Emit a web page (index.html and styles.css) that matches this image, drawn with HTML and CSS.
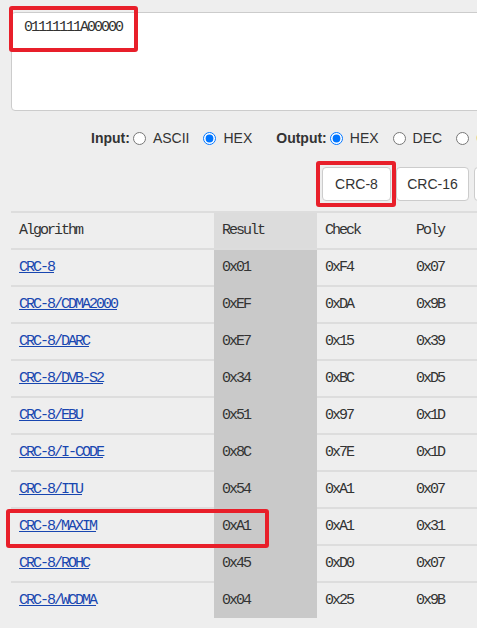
FILE: index.html
```html
<!DOCTYPE html>
<html>
<head>
<meta charset="utf-8">
<link rel="stylesheet" href="styles.css">
</head>
<body>
<div class="page">
  <div class="input-box">01111111A00000</div>

  <div class="opts">
    <span class="lbl">Input:</span>
    <label class="opt"><input type="radio" name="in"><span>ASCII</span></label>
    <label class="opt"><input type="radio" name="in" checked><span>HEX</span></label>
    <span class="lbl out">Output:</span>
    <label class="opt"><input type="radio" name="out" checked><span>HEX</span></label>
    <label class="opt"><input type="radio" name="out"><span>DEC</span></label>
    <label class="opt"><input type="radio" name="out"><span class="oct">OCT</span></label>
  </div>

  <div class="btns">
    <button class="btn w8">CRC-8</button>
    <button class="btn w16">CRC-16</button>
    <button class="btn w32">CRC-32</button>
  </div>

  <table class="crc">
    <colgroup>
      <col class="c-alg"><col class="c-res"><col class="c-chk"><col class="c-poly">
    </colgroup>
    <thead>
      <tr><th>Algorithm</th><th class="res">Result</th><th>Check</th><th>Poly</th></tr>
    </thead>
    <tbody>
      <tr><td><a href="#">CRC-8</a></td><td class="res">0x01</td><td>0xF4</td><td>0x07</td></tr>
      <tr><td><a href="#">CRC-8/CDMA2000</a></td><td class="res">0xEF</td><td>0xDA</td><td>0x9B</td></tr>
      <tr><td><a href="#">CRC-8/DARC</a></td><td class="res">0xE7</td><td>0x15</td><td>0x39</td></tr>
      <tr><td><a href="#">CRC-8/DVB-S2</a></td><td class="res">0x34</td><td>0xBC</td><td>0xD5</td></tr>
      <tr><td><a href="#">CRC-8/EBU</a></td><td class="res">0x51</td><td>0x97</td><td>0x1D</td></tr>
      <tr><td><a href="#">CRC-8/I-CODE</a></td><td class="res">0x8C</td><td>0x7E</td><td>0x1D</td></tr>
      <tr><td><a href="#">CRC-8/ITU</a></td><td class="res">0x54</td><td>0xA1</td><td>0x07</td></tr>
      <tr><td><a href="#">CRC-8/MAXIM</a></td><td class="res">0xA1</td><td>0xA1</td><td>0x31</td></tr>
      <tr><td><a href="#">CRC-8/ROHC</a></td><td class="res">0x45</td><td>0xD0</td><td>0x07</td></tr>
      <tr><td><a href="#">CRC-8/WCDMA</a></td><td class="res">0x04</td><td>0x25</td><td>0x9B</td></tr>
    </tbody>
  </table>
</div>

<div class="mark mark-input"></div>
<div class="mark mark-btn"></div>
<div class="mark mark-row"></div>
</body>
</html>
```

FILE: styles.css
```css
html, body {
  margin: 0;
  padding: 0;
  overflow: hidden;
  background: #eeeeee;
}

body {
  position: relative;
  width: 477px;
  height: 628px;
}

.page {
  width: 900px;
  padding: 12px 0 0 11px;
}

.input-box {
  width: 700px;
  height: 99px;
  box-sizing: border-box;
  background: #fff;
  border: 1px solid #cccccc;
  border-radius: 4px;
  padding: 5px 12px;
  font-family: "Liberation Mono", monospace;
  font-size: 15px;
  letter-spacing: -2px;
  line-height: 20px;
  color: #333;
}

.opts {
  display: flex;
  align-items: center;
  height: 24px;
  margin: 15px 0 0 80px;
  font-family: "Liberation Sans", Arial, sans-serif;
  font-size: 14px;
  color: #333;
  white-space: nowrap;
}

.lbl {
  font-weight: bold;
  margin-right: 3px;
}

.lbl.out {
  margin-left: 10px;
}

.opt {
  display: flex;
  align-items: center;
  margin-right: 14px;
}

.opt input {
  margin: 0 7px 0 0;
  width: 13px;
  height: 13px;
}

.oct {
  color: #c8861a;
}

.btns {
  display: flex;
  gap: 5px;
  margin: 17px 0 0 311px;
}

.btn {
  height: 34px;
  padding: 0;
  border: 1px solid #cccccc;
  border-radius: 4px;
  background: #fff;
  font-family: "Liberation Sans", Arial, sans-serif;
  font-size: 14px;
  color: #333;
}

.w8 { width: 69px; }
.w16 { width: 73px; }
.w32 { width: 73px; }

.crc {
  margin-top: 10px;
  border-collapse: collapse;
  table-layout: fixed;
  width: 466px;
  border-top: 2px solid #dddddd;
  font-family: "Liberation Mono", monospace;
  font-size: 15px;
  letter-spacing: -2px;
  color: #333;
}

.c-alg { width: 203px; }
.c-res { width: 103px; }
.c-chk { width: 91px; }

.crc th, .crc td {
  height: 35px;
  padding: 0 0 0 8px;
  text-align: left;
  font-weight: normal;
  border-bottom: 2px solid #dddddd;
  white-space: nowrap;
}

.crc tbody tr:last-child td {
  border-bottom: none;
}

.crc th.res {
  background: #dcdcdc;
}

.crc td.res {
  background: #c9c9c9;
  border-bottom-color: #c9c9c9;
}

.crc a {
  color: #1846b0;
  text-decoration: underline;
}

.mark {
  position: absolute;
  box-sizing: border-box;
  border: 4px solid #e81f2a;
  border-radius: 3px;
}

.mark-input {
  left: 9px;
  top: 6px;
  width: 129px;
  height: 46px;
}

.mark-btn {
  left: 316px;
  top: 161px;
  width: 80px;
  height: 46px;
}

.mark-row {
  left: 6px;
  top: 509px;
  width: 263px;
  height: 39px;
}
```
